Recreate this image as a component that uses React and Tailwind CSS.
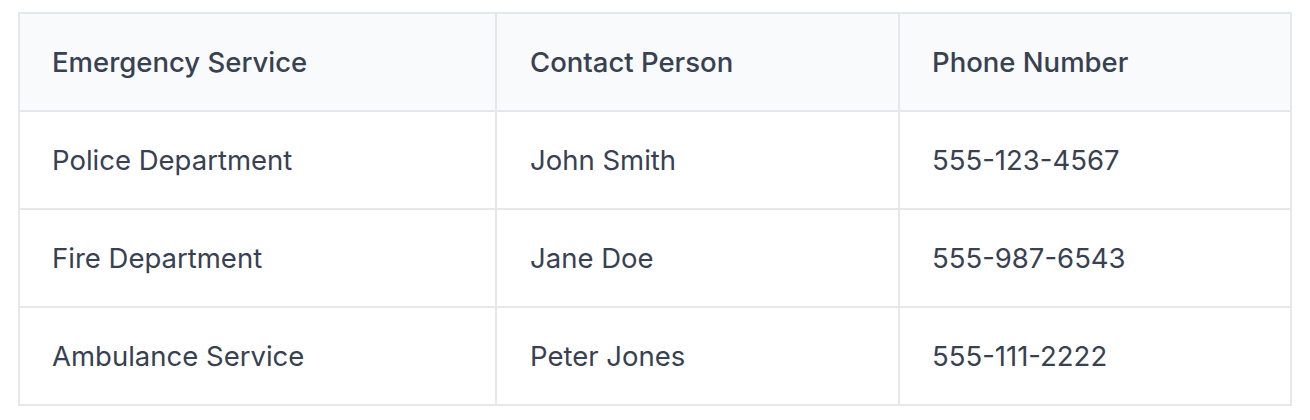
import React from "react";

const rows = [
  ["Police Department", "John Smith", "555-123-4567"],
  ["Fire Department", "Jane Doe", "555-987-6543"],
  ["Ambulance Service", "Peter Jones", "555-111-2222"],
];

const widths = ["w-[477px]", "w-[403px]", "w-[392px]"];
const pads = ["pl-[32px]", "pl-[33px]", "pl-[32px]"];

export default function App() {
  return (
    <div className="bg-white min-h-[420px] pt-[12px] pl-[18px]" style={{ fontFamily: "Inter, 'Noto Sans', sans-serif" }}>
      <div className="w-[1274px] border-l-2 border-t-2 border-[#e5e7eb] text-[#374151] text-[27.5px]">
        <div className="flex bg-[#f9fafb]">
          {["Emergency Service", "Contact Person", "Phone Number"].map((h, i) => (
            <div key={h} className={`${widths[i]} ${pads[i]} h-[98px] pt-[2px] flex items-center border-r-2 border-b-2 border-[#e5e7eb] font-medium`}>
              {h}
            </div>
          ))}
        </div>
        {rows.map((r) => (
          <div key={r[0]} className="flex bg-white">
            {r.map((c, i) => (
              <div key={i} className={`${widths[i]} ${pads[i]} h-[98px] pt-[2px] flex items-center border-r-2 border-b-2 border-[#e5e7eb]`}>
                {c}
              </div>
            ))}
          </div>
        ))}
      </div>
    </div>
  );
}
